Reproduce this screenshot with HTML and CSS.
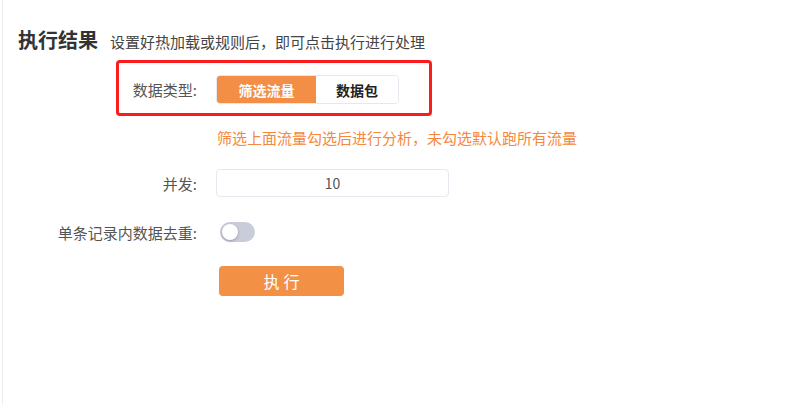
FILE: index.html
```html
<!DOCTYPE html>
<html lang="zh-CN">
<head>
<meta charset="utf-8">
<title>执行结果</title>
<link rel="stylesheet" href="styles.css">
</head>
<body>
<div class="page">
  <div class="header">
    <h2 class="title">执行结果</h2>
    <span class="subtitle">设置好热加载或规则后，即可点击执行进行处理</span>
  </div>
  <div class="form">
    <div class="form-row row-type">
      <label class="label">数据类型:</label>
      <div class="segmented">
        <button class="seg seg-active">筛选流量</button>
        <button class="seg">数据包</button>
      </div>
    </div>
    <div class="hint-row">
      <span class="hint">筛选上面流量勾选后进行分析，未勾选默认跑所有流量</span>
    </div>
    <div class="form-row row-input">
      <label class="label">并发:</label>
      <input class="input" type="text" value="10">
    </div>
    <div class="form-row row-switch">
      <label class="label">单条记录内数据去重:</label>
      <span class="switch"><span class="knob"></span></span>
    </div>
    <div class="form-row row-btn">
      <button class="btn-primary">执行</button>
    </div>
  </div>
</div>
</body>
</html>
```

FILE: styles.css
```css
html, body {
  margin: 0;
  padding: 0;
  background: #ffffff;
}
body {
  font-family: "Noto Sans CJK SC", "Noto Sans", sans-serif;
  color: #333;
}
.page {
  margin-left: 2px;
  border-left: 1px solid #ececec;
  height: 405px;
  box-sizing: border-box;
}
.header {
  display: flex;
  align-items: baseline;
  padding-top: 26px;
  padding-left: 15px;
  height: 28px;
}
.title {
  margin: 0;
  font-size: 20px;
  line-height: 28px;
  font-weight: 700;
  color: #333;
}
.subtitle {
  margin-left: 12px;
  font-size: 15px;
  line-height: 20px;
  color: #444;
}
.form {
  display: flex;
  flex-direction: column;
}
.form-row {
  display: flex;
  align-items: center;
}
.label {
  width: 213px;
  box-sizing: border-box;
  padding-right: 19px;
  text-align: right;
  font-size: 15px;
  color: #555;
  white-space: nowrap;
  flex: none;
}
.row-type {
  position: relative;
  margin-top: 21px;
  height: 29px;
}
.row-type::before {
  content: "";
  position: absolute;
  left: 113px;
  top: -15px;
  width: 316px;
  height: 56px;
  box-sizing: border-box;
  border: 3px solid #fb1d1d;
  border-radius: 4px;
  pointer-events: none;
}
.segmented {
  display: flex;
  height: 29px;
  border: 1px solid #e6e8ef;
  border-radius: 4px;
  box-sizing: border-box;
  overflow: hidden;
}
.seg {
  border: 0;
  margin: 0;
  padding: 0;
  font-family: inherit;
  font-size: 14px;
  font-weight: 700;
  background: #fff;
  color: #222;
  width: 82px;
}
.seg-active {
  width: 99px;
  background: #f28e46;
  color: #fff;
}
.hint-row {
  margin-top: 23px;
  padding-left: 214px;
  height: 20px;
  line-height: 20px;
}
.hint {
  font-size: 15px;
  color: #f5883c;
}
.row-input {
  margin-top: 22px;
  height: 28px;
}
.input {
  width: 233px;
  height: 28px;
  box-sizing: border-box;
  border: 1px solid #e6e8ef;
  border-radius: 4px;
  text-align: center;
  font-family: inherit;
  font-size: 14px;
  color: #555;
  padding: 0;
  outline: none;
}
.row-switch {
  margin-top: 21px;
  height: 28px;
}
.switch {
  margin-left: 4px;
  width: 35px;
  height: 20px;
  border-radius: 10px;
  background: #c9cdda;
  position: relative;
  display: inline-block;
}
.knob {
  position: absolute;
  left: 2px;
  top: 2px;
  width: 16px;
  height: 16px;
  border-radius: 50%;
  background: #fff;
  box-shadow: 0 1px 3px rgba(0, 0, 0, 0.25);
}
.row-btn {
  margin-top: 20px;
  padding-left: 216px;
}
.btn-primary {
  width: 125px;
  height: 30px;
  border: 0;
  border-radius: 4px;
  background: #f29046;
  color: #fff;
  font-family: inherit;
  font-size: 16px;
  letter-spacing: 4px;
  text-indent: 4px;
  padding: 0;
}
```
